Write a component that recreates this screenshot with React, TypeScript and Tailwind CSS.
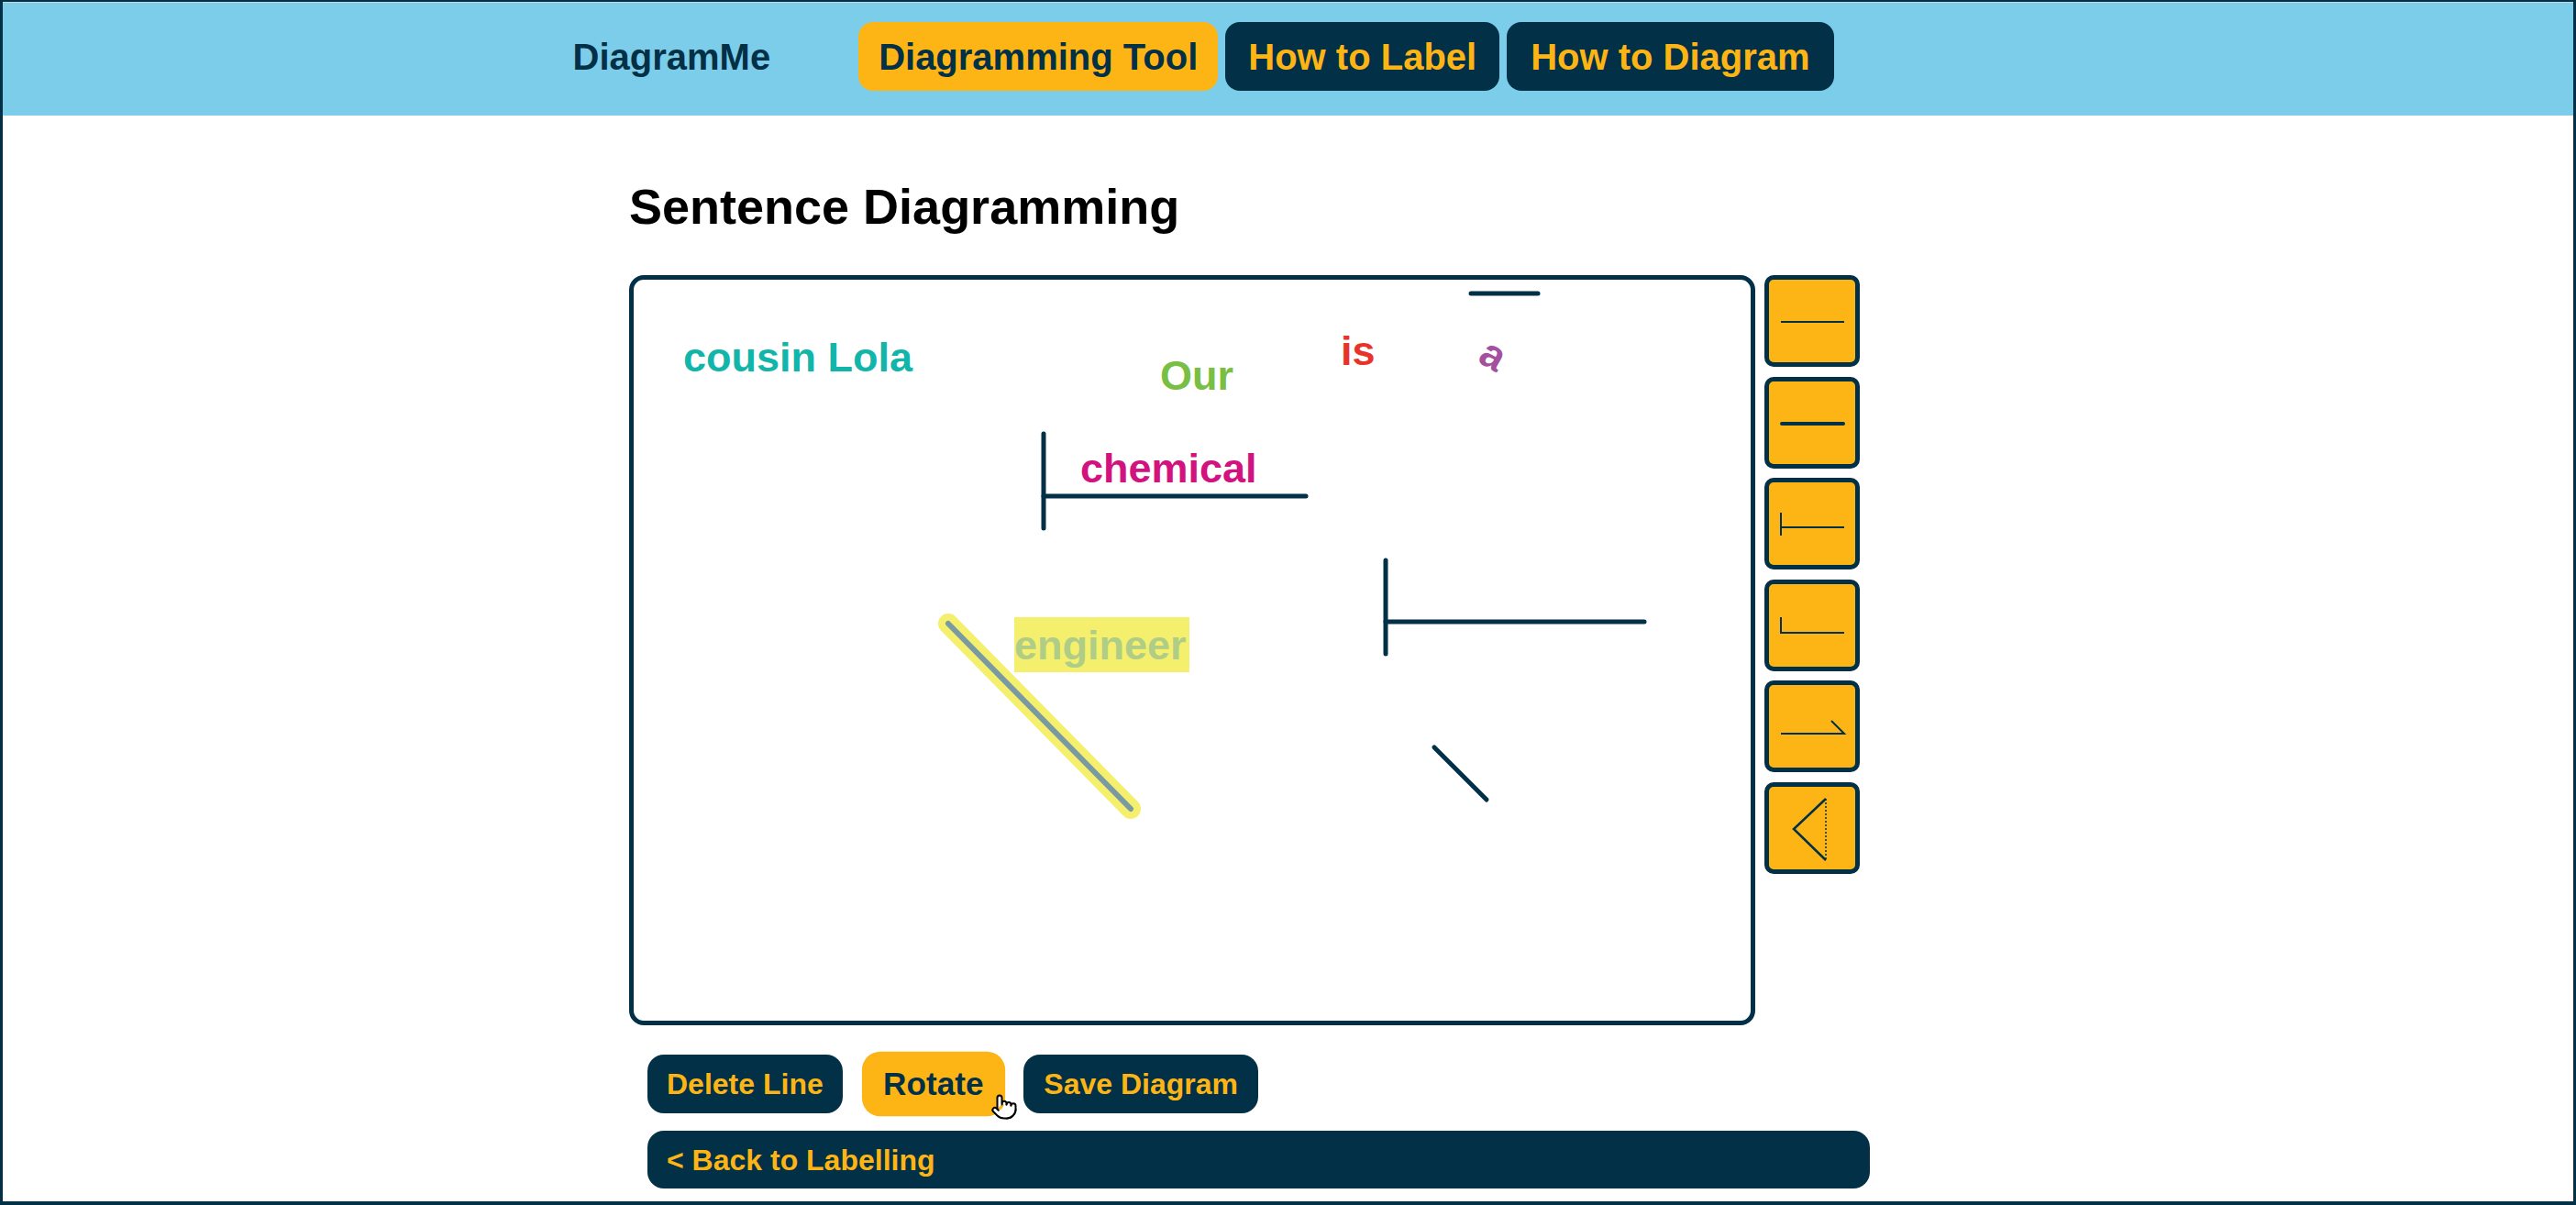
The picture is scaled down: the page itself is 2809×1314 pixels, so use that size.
import { Pointer } from "lucide-react";

const navy = "#023047";

function ToolIcon({ kind }: { kind: number }) {
  return (
    <svg width="94" height="90" viewBox="0 0 94 90" className="block">
      {kind === 0 && <line x1="13" y1="46" x2="82" y2="46" stroke={navy} strokeWidth="2" />}
      {kind === 1 && (
        <line x1="14" y1="46" x2="81" y2="46" stroke={navy} strokeWidth="4" strokeLinecap="round" />
      )}
      {kind === 2 && (
        <g stroke={navy} strokeWidth="2" fill="none">
          <line x1="13" y1="33" x2="13" y2="58" />
          <line x1="13" y1="49" x2="82" y2="49" />
        </g>
      )}
      {kind === 3 && (
        <g stroke={navy} strokeWidth="2" fill="none">
          <polyline points="13,36 13,53 82,53" />
        </g>
      )}
      {kind === 4 && (
        <g stroke={navy} strokeWidth="2" fill="none">
          <polyline points="13,53 82,53 68,39" />
        </g>
      )}
      {kind === 5 && (
        <g fill="none" stroke={navy}>
          <polyline points="62,13 27,46 62,80" strokeWidth="2.5" />
          <line x1="62" y1="13" x2="62" y2="80" strokeWidth="1.5" strokeDasharray="2 2" />
        </g>
      )}
    </svg>
  );
}

export default function App() {
  const tools = [0, 1, 2, 3, 4, 5];

  return (
    <div
      className="min-h-screen bg-white border-x-[3px] border-b-[4px] border-t-2 border-[#023047]"
      style={{ fontFamily: '"Liberation Sans", Arial, sans-serif' }}
    >
      <div className="h-px bg-[#c9d7dd]" />
      <header className="h-[123px] bg-[#7ccdea] pt-[21px]">
        <nav className="w-[1560px] mx-auto flex items-center">
          <span className="text-[40px] leading-none font-bold text-[#023047] mr-[96px]">DiagramMe</span>
          <div className="flex gap-2">
            <button className="h-[75px] px-[22px] rounded-[16px] bg-[#fdb515] text-[#023047] text-[40px] leading-none font-bold">
              Diagramming Tool
            </button>
            <button className="h-[75px] px-[25px] rounded-[16px] bg-[#023047] text-[#fdb515] text-[40px] leading-none font-bold">
              How to Label
            </button>
            <button className="h-[75px] px-[26px] rounded-[16px] bg-[#023047] text-[#fdb515] text-[40px] leading-none font-bold">
              How to Diagram
            </button>
          </div>
        </nav>
      </header>

      <main className="w-[1437px] mx-auto">
        <h1 className="mt-[72px] mb-[48px] text-[54px] leading-none font-bold text-black">
          Sentence Diagramming
        </h1>

        <div className="flex items-start gap-[10px]">
          <div className="relative w-[1228px] h-[818px] border-[5px] border-[#023047] rounded-[16px] bg-white">
            <svg className="absolute inset-0" width="1218" height="808" viewBox="0 0 1218 808">
              <g stroke={navy} strokeWidth="5" strokeLinecap="round" fill="none">
                <line x1="913" y1="15" x2="986" y2="15" />
                <line x1="447" y1="168" x2="447" y2="271" />
                <line x1="447" y1="236" x2="733" y2="236" />
                <line x1="820" y1="306" x2="820" y2="408" />
                <line x1="820" y1="373" x2="1102" y2="373" />
                <line x1="873" y1="510" x2="930" y2="567" />
              </g>
              <line x1="343" y1="375" x2="542" y2="577" stroke="#f5ef6e" strokeWidth="22" strokeLinecap="round" />
              <line x1="343" y1="375" x2="542" y2="577" stroke="#7a9aa3" strokeWidth="6" strokeLinecap="round" />
            </svg>

            <span className="absolute left-[54px] top-[62px] text-[45px] leading-none font-bold text-[#12b5aa]">
              cousin Lola
            </span>
            <span className="absolute left-[574px] top-[82px] text-[45px] leading-none font-bold text-[#79bf43]">
              Our
            </span>
            <span className="absolute left-[771px] top-[55px] text-[45px] leading-none font-bold text-[#e8332a]">
              is
            </span>
            <span className="absolute left-[925px] top-[59px] text-[45px] leading-none font-bold text-[#a4509f] rotate-[30deg]">
              a
            </span>
            <span className="absolute left-[487px] top-[183px] text-[45px] leading-none font-bold text-[#d2127f]">
              chemical
            </span>
            <span className="absolute left-[415px] top-[368px] w-[191px] h-[60px] bg-[#f5ef6e] text-[45px] leading-[60px] pt-px font-bold text-[#afcd86] whitespace-nowrap">
              engineer
            </span>
          </div>

          <div className="flex flex-col gap-[10.6px]">
            {tools.map(t => (
              <button
                key={t}
                className="w-[104px] h-[100px] border-[5px] border-[#023047] rounded-[10px] bg-[#fdb515]"
              >
                <ToolIcon kind={t} />
              </button>
            ))}
          </div>
        </div>

        <div className="pl-[20px] pt-[32px]">
          <div className="relative flex items-center gap-7">
            <button className="h-[64px] px-[21px] rounded-[18px] bg-[#023047] text-[#fdb515] text-[32px] leading-none font-bold">
              Delete Line
            </button>
            <button className="h-[64px] px-[21px] rounded-[18px] bg-[#fdb515] text-[#023047] text-[32px] leading-none font-bold scale-110">
              Rotate
            </button>
            <button className="h-[64px] px-[22px] rounded-[18px] bg-[#023047] text-[#fdb515] text-[32px] leading-none font-bold">
              Save Diagram
            </button>
            <Pointer
              className="absolute left-[374px] top-[42px]"
              size={30}
              fill="white"
              stroke="black"
              strokeWidth={1.6}
            />
          </div>
          <button className="mt-[19px] w-[1333px] h-[63px] px-[21px] rounded-[18px] bg-[#023047] text-[#fdb515] text-[32px] leading-none font-bold text-left">
            &lt; Back to Labelling
          </button>
        </div>
      </main>
    </div>
  );
}
